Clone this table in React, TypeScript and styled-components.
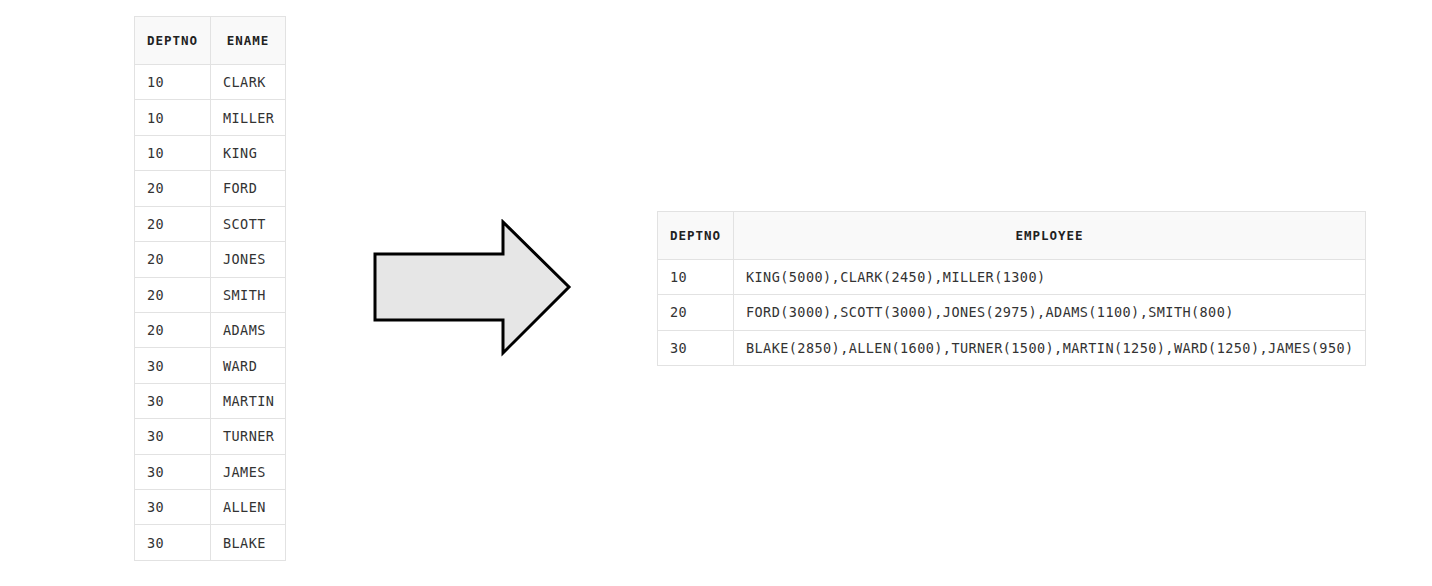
import styled, { createGlobalStyle } from "styled-components";

type TRow = { deptno: number; value: string };

const EMPLOYEES: TRow[] = [
    { deptno: 10, value: "CLARK" },
    { deptno: 10, value: "MILLER" },
    { deptno: 10, value: "KING" },
    { deptno: 20, value: "FORD" },
    { deptno: 20, value: "SCOTT" },
    { deptno: 20, value: "JONES" },
    { deptno: 20, value: "SMITH" },
    { deptno: 20, value: "ADAMS" },
    { deptno: 30, value: "WARD" },
    { deptno: 30, value: "MARTIN" },
    { deptno: 30, value: "TURNER" },
    { deptno: 30, value: "JAMES" },
    { deptno: 30, value: "ALLEN" },
    { deptno: 30, value: "BLAKE" },
];

const GROUPED: TRow[] = [
    { deptno: 10, value: "KING(5000),CLARK(2450),MILLER(1300)" },
    { deptno: 20, value: "FORD(3000),SCOTT(3000),JONES(2975),ADAMS(1100),SMITH(800)" },
    { deptno: 30, value: "BLAKE(2850),ALLEN(1600),TURNER(1500),MARTIN(1250),WARD(1250),JAMES(950)" },
];

const GlobalStyle = createGlobalStyle`
    html, body {
        margin: 0;
        background: #ffffff;
    }
`

const StyledPage = styled.div`
    display: flex;
    align-items: center;
    padding: 16px 0 0 134px;
    width: 1432px;
    box-sizing: border-box;
`
const StyledTable = styled.table<{ width: number }>`
    width: ${({ width }) => width}px;
    border-collapse: collapse;
    table-layout: fixed;
    font-family: "DejaVu Sans Mono", "Liberation Mono", monospace;
    color: #333333;
`
const StyledHeadCell = styled.th`
    height: 47px;
    padding: 0;
    background: #f9f9f9;
    border: 1px solid #e2e2e2;
    font-size: 12.5px;
    font-weight: bold;
    letter-spacing: 1px;
    text-align: center;
    color: #222222;
`
const StyledCell = styled.td<{ rowHeight: number }>`
    height: ${({ rowHeight }) => rowHeight}px;
    padding: 0 0 0 12px;
    border: 1px solid #e2e2e2;
    font-size: 13.5px;
    letter-spacing: 0.43px;
    white-space: nowrap;
    vertical-align: middle;
`
const StyledArrow = styled.svg`
    flex: none;
    margin: 0 85px 0 86px;
`

const DataTable = ({
    width,
    columns,
    rows,
    rowHeight,
}: {
    width: number,
    columns: string[],
    rows: TRow[],
    rowHeight: number,
}) => (
    <StyledTable width={width}>
        <colgroup>
            <col style={{ width: 76 }} />
            <col />
        </colgroup>
        <thead>
            <tr>
                {columns.map(c => <StyledHeadCell key={c}>{c}</StyledHeadCell>)}
            </tr>
        </thead>
        <tbody>
            {rows.map((r, i) => (
                <tr key={i}>
                    <StyledCell rowHeight={rowHeight}>{r.deptno}</StyledCell>
                    <StyledCell rowHeight={rowHeight}>{r.value}</StyledCell>
                </tr>
            ))}
        </tbody>
    </StyledTable>
)

export default function App() {
    return (
        <>
            <GlobalStyle />
            <StyledPage>
                <DataTable width={152} columns={["DEPTNO", "ENAME"]} rows={EMPLOYEES} rowHeight={34.43} />

                <StyledArrow width="200" height="138" viewBox="0 0 200 138">
                    <polygon
                        points="3,35 131,35 131,3 197,68 131,134 131,101 3,101"
                        fill="#e6e6e6"
                        stroke="#000000"
                        strokeWidth="3"
                        strokeLinejoin="miter"
                    />
                </StyledArrow>

                <DataTable width={709} columns={["DEPTNO", "EMPLOYEE"]} rows={GROUPED} rowHeight={34.33} />
            </StyledPage>
        </>
    )
}
